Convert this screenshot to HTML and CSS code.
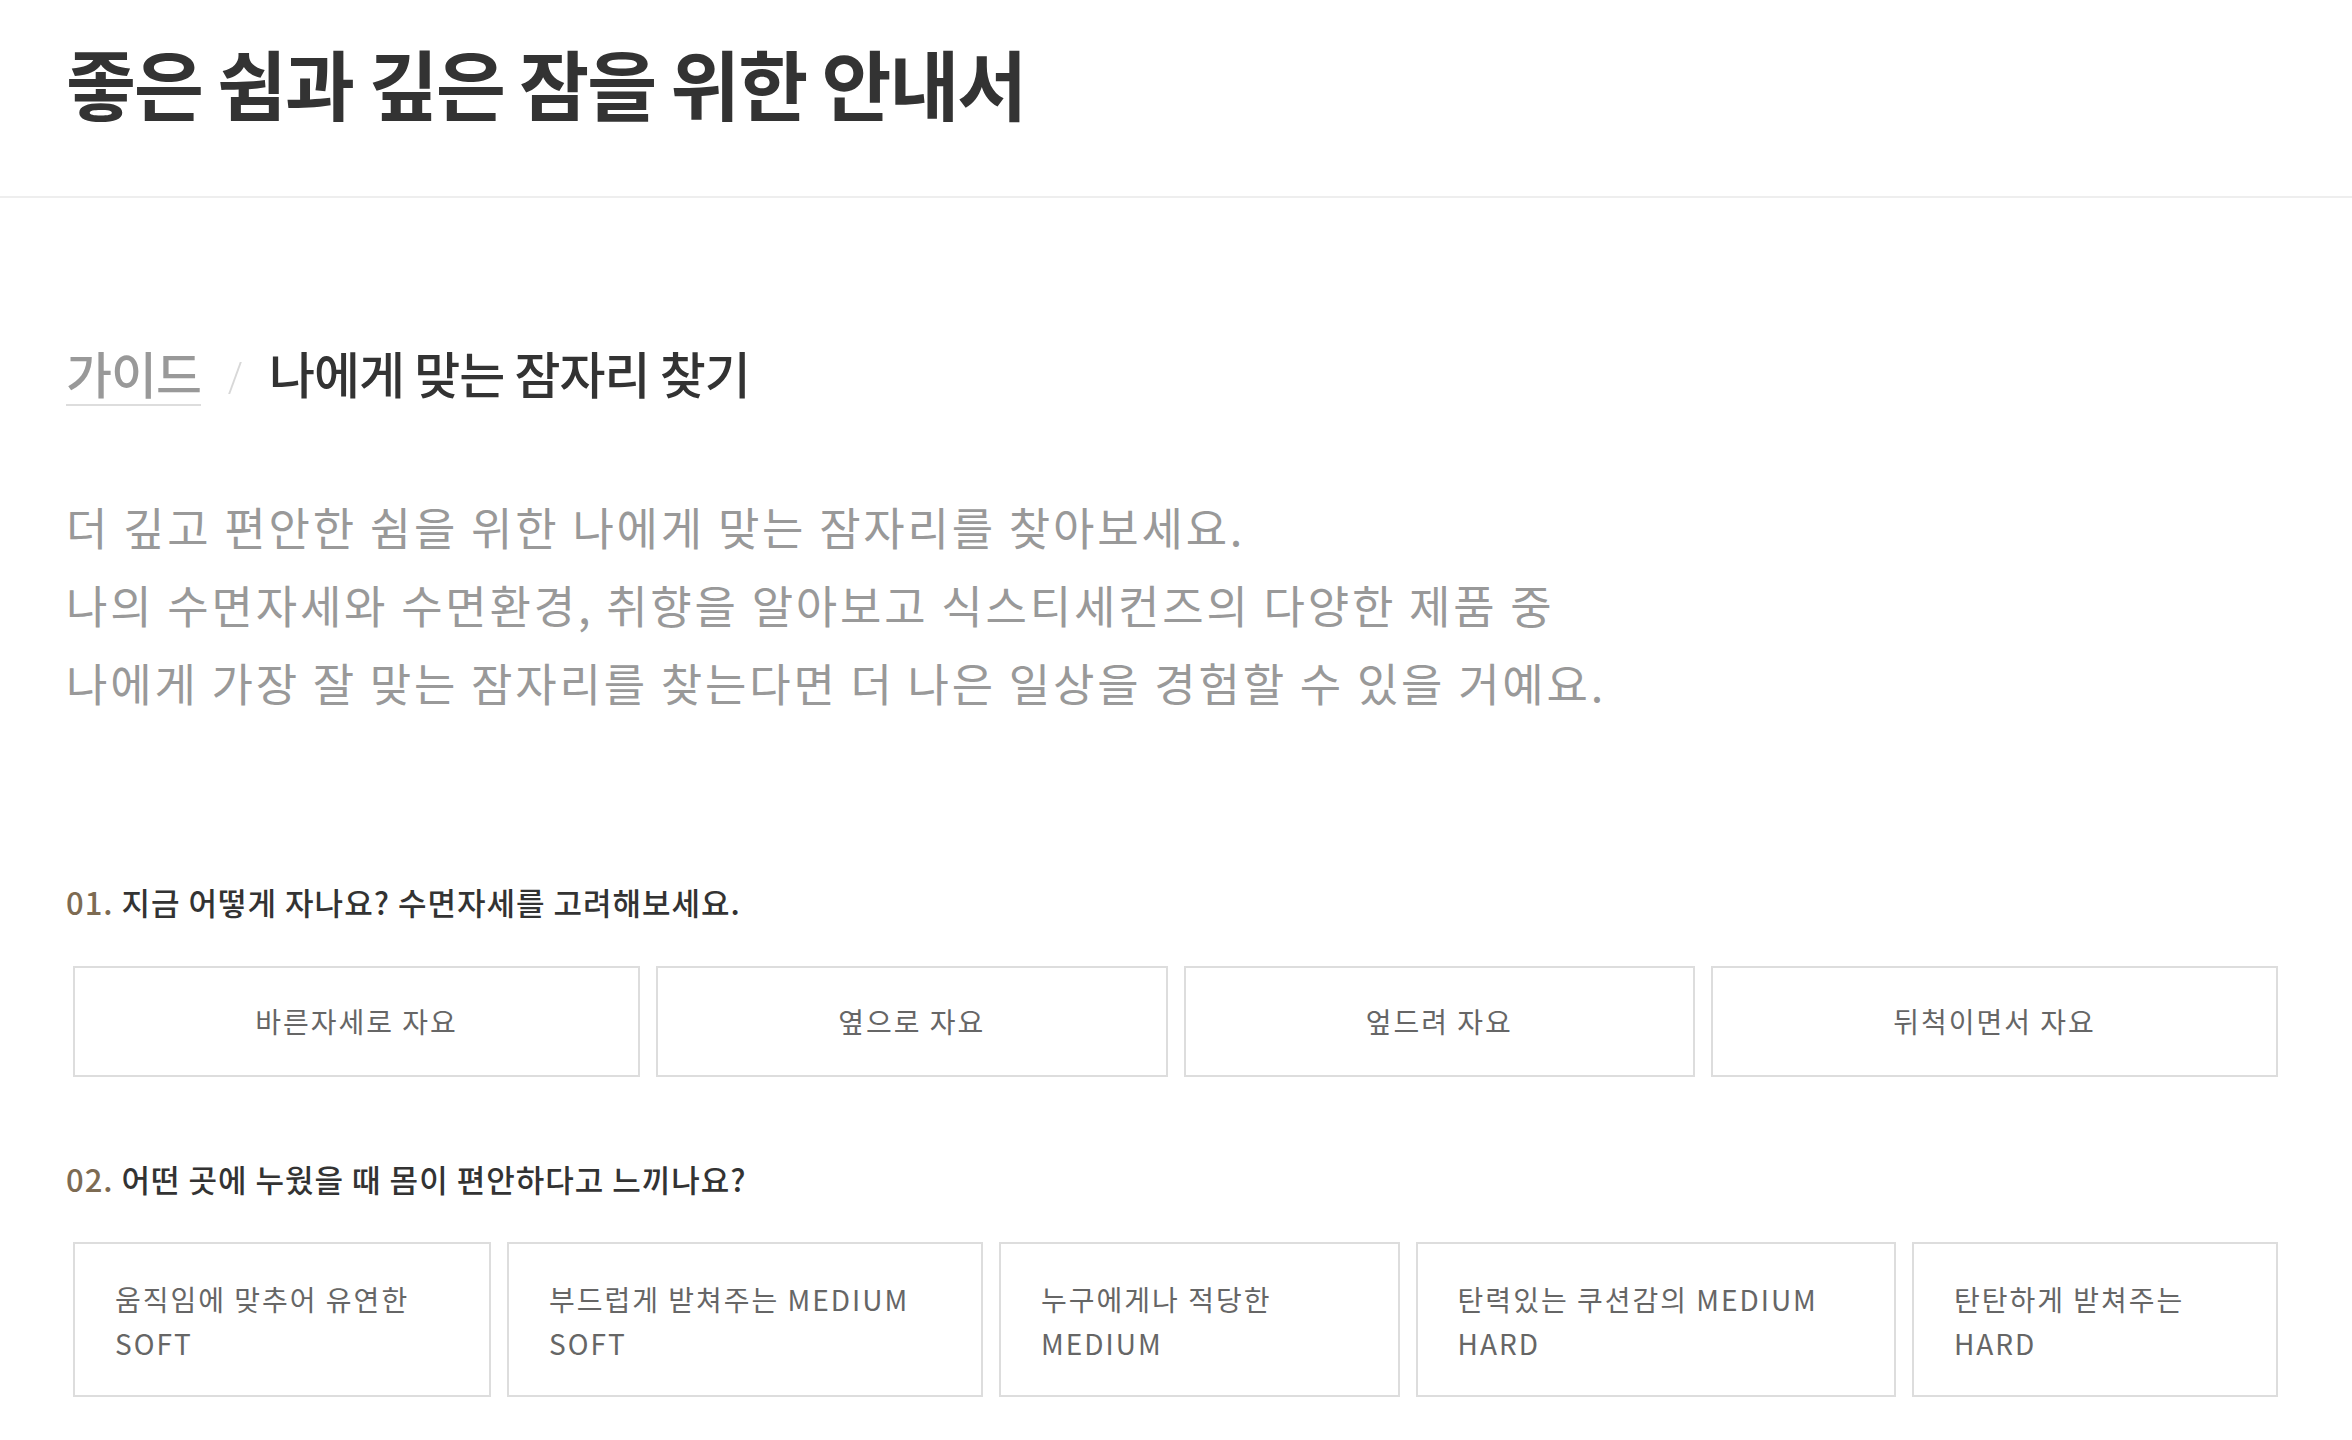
FILE: index.html
```html
<html>
<head>
    <title>좋은 쉼과 깊은 잠을 위한 안내서</title>
    <link rel="stylesheet" href="styles.css">
</head>
<body>
    <header class="header">
        <h1>좋은 쉼과 깊은 잠을 위한 안내서</h1>
    </header>

    <main class="guide">
        <div class="crumb">
            <span class="crumb-parent">가이드</span>
            <span class="crumb-sep"></span>
            <span class="crumb-current">나에게 맞는 잠자리 찾기</span>
        </div>

        <p class="intro">
            더 깊고 편안한 쉼을 위한 나에게 맞는 잠자리를 찾아보세요.<br>
            나의 수면자세와 수면환경, 취향을 알아보고 식스티세컨즈의 다양한 제품 중<br>
            나에게 가장 잘 맞는 잠자리를 찾는다면 더 나은 일상을 경험할 수 있을 거예요.
        </p>

        <h3 class="question q1"><span class="num">01.</span> 지금 어떻게 자나요? 수면자세를 고려해보세요.</h3>
        <ul class="options center">
            <li>바른자세로 자요</li>
            <li>옆으로 자요</li>
            <li>엎드려 자요</li>
            <li>뒤척이면서 자요</li>
        </ul>

        <h3 class="question q2"><span class="num">02.</span> 어떤 곳에 누웠을 때 몸이 편안하다고 느끼나요?</h3>
        <ul class="options left">
            <li>움직임에 맞추어 유연한 SOFT</li>
            <li>부드럽게 받쳐주는 MEDIUM SOFT</li>
            <li>누구에게나 적당한 MEDIUM</li>
            <li>탄력있는 쿠션감의 MEDIUM HARD</li>
            <li>탄탄하게 받쳐주는 HARD</li>
        </ul>
    </main>
</body>
</html>
```

FILE: styles.css
```css
body {
    margin: 0;
    font-family: "Noto Sans CJK KR", "Noto Sans", sans-serif;
    color: #333;
    background: #fff;
}

.header {
    padding: 32px 66px 64px;
    border-bottom: 2px solid #eee;
}

.header h1 {
    margin: 0;
    font-size: 76px;
    line-height: 100px;
    font-weight: 700;
    letter-spacing: -2px;
    color: #333;
}

.guide {
    padding: 0 66px;
}

.crumb {
    margin-top: 140px;
    display: flex;
    align-items: center;
    font-size: 50px;
    line-height: 60px;
    font-weight: 500;
    letter-spacing: -1px;
}

.crumb-parent {
    color: #999;
    border-bottom: 2px solid #ddd;
    padding-bottom: 2px;
    margin-top: 4px;
}

.crumb-sep {
    display: inline-block;
    width: 2px;
    height: 32px;
    background: #d8d8d8;
    transform: skewX(-20deg);
    margin: 12px 33px 0 33px;
}

.crumb-current {
    color: #333;
}

.intro {
    margin: 82px 0 0;
    font-size: 45px;
    line-height: 78px;
    letter-spacing: 2.8px;
    color: #999;
}

.question {
    margin: 0;
    font-size: 31px;
    line-height: 40px;
    font-weight: 500;
    letter-spacing: 1px;
    color: #333;
}

.q1 {
    margin-top: 160px;
}

.q2 {
    margin-top: 82px;
}

.num {
    color: #7d6b52;
}

.options {
    list-style: none;
    margin: 44px 0 0;
    padding: 0 8px 0 7px;
    display: flex;
    gap: 16px;
}

.q2 + .options {
    margin-top: 43px;
}

.options li {
    flex: 1 1 auto;
    border: 2px solid #ddd;
    font-size: 28px;
    line-height: 45px;
    letter-spacing: 2px;
    color: #666;
    word-break: keep-all;
}

.options.center li {
    text-align: center;
    padding: 31px 40px;
}

.options.left li {
    text-align: left;
    padding: 33px 40px 30px;
    line-height: 44px;
}
```
